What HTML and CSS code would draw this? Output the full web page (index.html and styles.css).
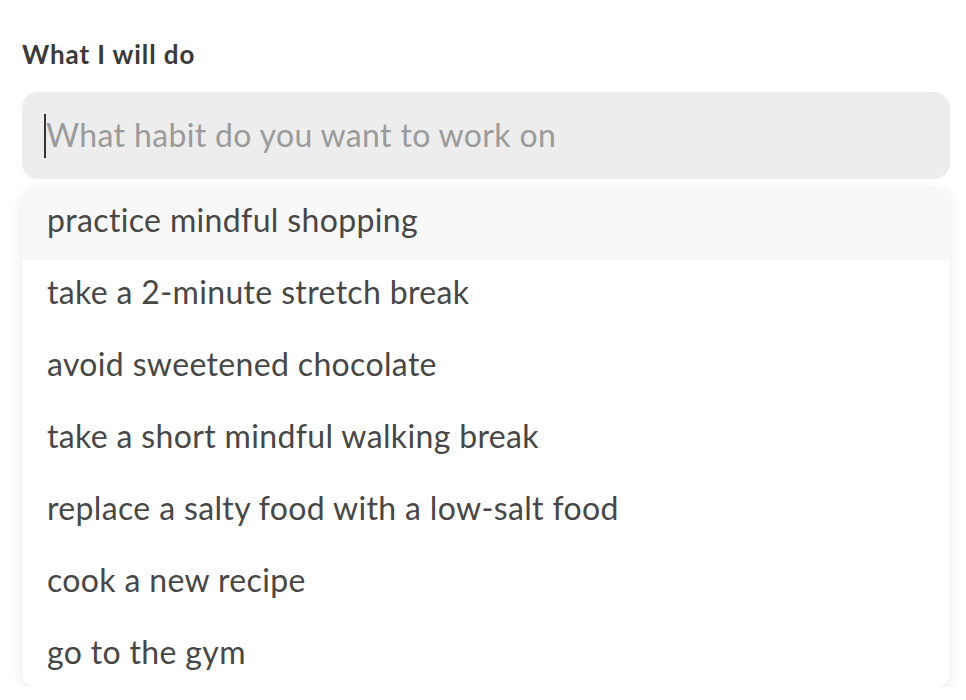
FILE: index.html
```html
<!DOCTYPE html>
<html lang="en">
<head>
<meta charset="utf-8">
<title>What I will do</title>
<link rel="stylesheet" href="styles.css">
</head>
<body>
<div class="field">
  <div class="label">What I will do</div>
  <div class="input">
    <span class="caret"></span>
    <span class="placeholder">What habit do you want to work on</span>
  </div>
  <ul class="menu">
    <li class="item active">practice mindful shopping</li>
    <li class="item">take a 2-minute stretch break</li>
    <li class="item">avoid sweetened chocolate</li>
    <li class="item">take a short mindful walking break</li>
    <li class="item">replace a salty food with a low-salt food</li>
    <li class="item">cook a new recipe</li>
    <li class="item">go to the gym</li>
  </ul>
</div>
</body>
</html>
```

FILE: styles.css
```css
html, body {
  margin: 0;
  padding: 0;
  background: #ffffff;
}
body {
  font-family: Lato, "Noto Sans", sans-serif;
  font-variant-ligatures: none;
  color: #444444;
}
.field {
  width: 928px;
  margin-left: 22px;
  padding-top: 36px;
}
.label {
  font-size: 26px;
  font-weight: 700;
  letter-spacing: 0.9px;
  line-height: 36px;
  color: #3a3a3a;
  height: 36px;
}
.input {
  margin-top: 20px;
  height: 87px;
  background: #ededed;
  border-radius: 16px;
  display: flex;
  align-items: center;
  padding-left: 22px;
  box-sizing: border-box;
}
.caret {
  width: 2px;
  height: 44px;
  background: #333333;
}
.placeholder {
  font-size: 32px;
  letter-spacing: 0.35px;
  color: #9b9b9b;
  margin-left: 0;
  padding-bottom: 2px;
}
.menu {
  list-style: none;
  margin: 9px 0 0 0;
  padding: 0;
  height: 499px;
  background: #ffffff;
  border-radius: 14px;
  overflow: hidden;
  box-shadow: 0 4px 16px rgba(0, 0, 0, 0.08), 0 0 3px rgba(0, 0, 0, 0.04);
}
.item {
  height: 72px;
  box-sizing: border-box;
  padding: 0 0 10px 25px;
  display: flex;
  align-items: center;
  font-size: 32px;
  letter-spacing: 0.35px;
  color: #474747;
}
.item.active {
  background: #f8f8f8;
}
```
